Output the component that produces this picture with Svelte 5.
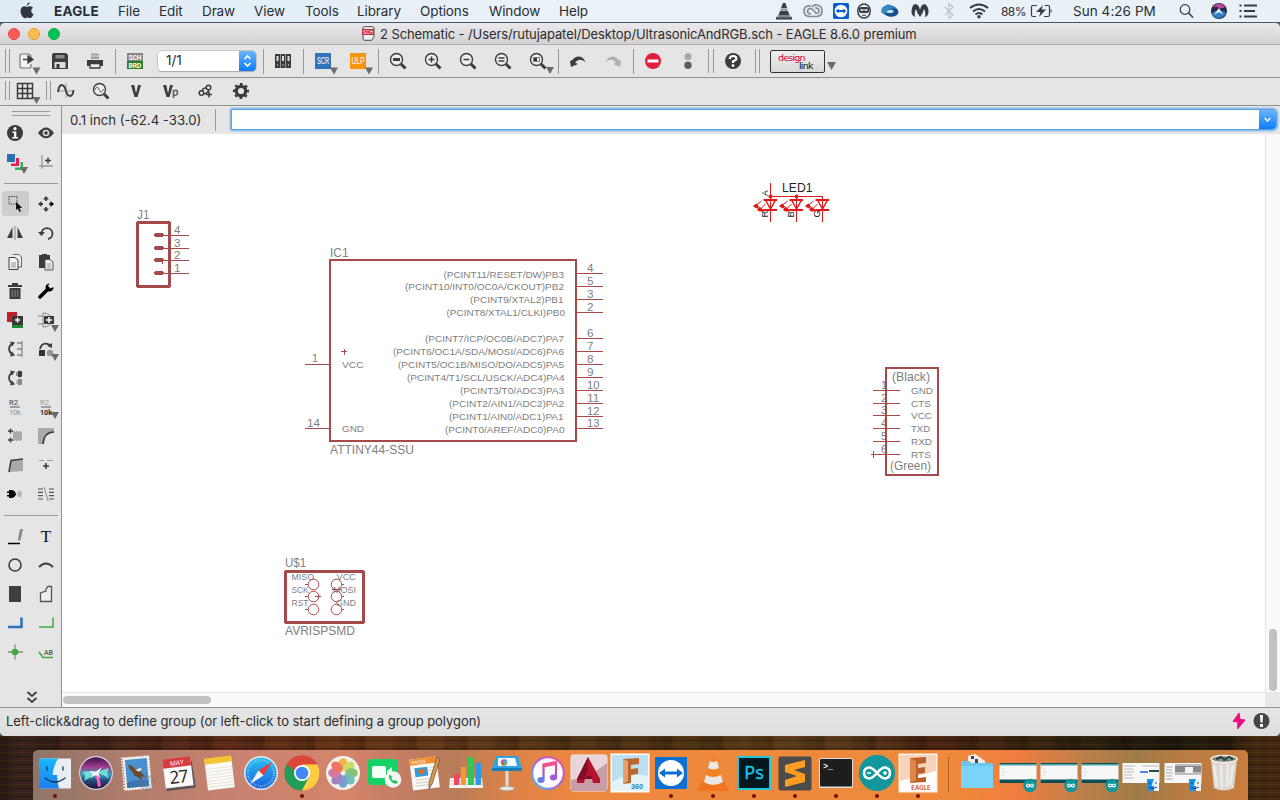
<script>
  const K = '#3c3c3c';
  const lens = (inner) =>
    `<circle cx="-1.500" cy="-1.500" r="6" fill="#eee" stroke="${K}" stroke-width="1.400"/>${inner}<path d="M3 3L7.500 7.500" stroke="${K}" stroke-width="3"/>`;

  const icons = {
    open: `<path d="M6-1V-5L4-7H-3Q-5-7-5-5V5Q-5 7-3 7H4Q6 7 6 5V3" fill="#f2f2f2" stroke="#777" stroke-width="1.200"/><path d="M-2-1.500h6M3-5l5 3.500L3 2z" fill="${K}" stroke="${K}" stroke-width="1.300"/><path d="M7.500 6.500h8l-4 7z" fill="#6b6b6b"/>`,
    save: `<path d="M-8-6Q-8-8-6-8H6L8-6V8H-8z" fill="${K}"/><path d="M-4.500-6H4.500V-2.500H-4.500z" fill="#8a8a8a"/><path d="M-5.500 1h11v6h-11z" fill="#dcdcdc"/><path d="M-3.500 3h3v4h-3z" fill="${K}"/>`,
    print: `<path d="M-4-7.500H4V-2H-4z" fill="#a3a3a3"/><path d="M-4-5H4" stroke="#ddd"/><path d="M-8-1H8V5H-8z" fill="${K}"/><path d="M-5 2.500H5V7H-5z" fill="#e8e8e8" stroke="${K}" stroke-width="1.300"/>`,
    sch: `<path d="M-8-8H8V0H-8z" fill="#858585"/><path d="M-8 0H8V8H-8z" fill="#23802a"/><g font-family="Roboto, sans-serif" font-weight="bold" font-size="8" fill="#fff" text-anchor="middle"><text x="0" y="-1.200" textLength="13" lengthAdjust="spacingAndGlyphs">SCH</text><text x="0" y="6.800" textLength="13" lengthAdjust="spacingAndGlyphs">BRD</text></g>`,
    bars: `<path d="M-8-7h5v14h-5zM-2.500-7h5v14h-5zM3-7h5v14h-5z" fill="${K}"/><path d="M-6.500-5h2v5h-2zM-1-5h2v5h-2zM4.500-5h2v5h-2z" fill="#ddd"/><path d="M-5.500 3v2M0 3v2M5.500 3v2" stroke="#aaa"/>`,
    scr: `<path d="M-8-8H8V8H-8z" fill="#2d74bb"/><text x="0" y="3" font-family="Roboto, sans-serif" font-size="8.500" fill="#fff" text-anchor="middle" textLength="12" lengthAdjust="spacingAndGlyphs">SCR</text><path d="M7 6.500h8l-4 7z" fill="#6b6b6b"/>`,
    ulp: `<path d="M-8-8H8V8H-8z" fill="#f6960f"/><text x="0" y="3" font-family="Roboto, sans-serif" font-size="8.500" fill="#fff" text-anchor="middle" textLength="13" lengthAdjust="spacingAndGlyphs">ULP</text><path d="M7 6.500h8l-4 7z" fill="#6b6b6b"/>`,
    zfit: lens(`<path d="M-5-3h7v3h-7z" fill="${K}"/>`),
    zin: lens(`<path d="M-4.500-1.500h6M-1.500-4.500v6" stroke="${K}" stroke-width="1.600"/>`),
    zout: lens(`<path d="M-4.500-1.500h6" stroke="${K}" stroke-width="1.600"/>`),
    zeq: lens(`<path d="M-4.500-3h6M-4.500 0h6" stroke="${K}" stroke-width="1.400"/>`),
    zsel: lens(`<path d="M-4.500-3.500H1.500V.500H-4.500z" fill="#eee" stroke="#777"/><path d="M-4-3h3v3h-3z" fill="#333"/>`) + '<path d="M8 6h8l-4 7z" fill="#6b6b6b"/>',
    undo: `<path d="M-8 0L-7 6L0 3L-3 1.500Q0-2 3-1Q6-1 7.500 2Q6-5 0-4.500Q-4-4-5.500-1z" fill="${K}"/>`,
    redo: `<path d="M8 0L7 6L0 3L3 1.500Q0-2-3-1Q-6-1-7.500 2Q-6-5 0-4.500Q4-4 5.500-1z" fill="#b0b0b0"/>`,
    stop: `<circle r="8" fill="#e01f3d"/><path d="M-5.500-1.500h11v3h-11z" fill="#fff"/>`,
    dots: `<circle cy="-4.500" r="3.500" fill="#a8a8a8"/><circle cy="4.300" r="3.700" fill="#5c5c5c"/>`,
    help: `<circle r="8" fill="${K}"/><path d="M-3.300-2Q-3-5 .2-5Q3.500-5 3.300-2Q3-.5 0 .3V2" fill="none" stroke="#fff" stroke-width="2.200"/><circle cx="0" cy="4.700" r="1.400" fill="#fff"/>`,
    grid: `<path d="M-7.500-7.500h15v15h-15zM-7.500-2.500h15M-7.500 2.500h15M-2.500-7.500v15M2.500-7.500v15" fill="none" stroke="${K}" stroke-width="1.500"/><path d="M7.500 6h8l-4 7z" fill="#6b6b6b"/>`,
    sine: `<path d="M-8 0h16M0-8v15" stroke="#999"/><path d="M-8 1Q-7-6-4.500-6Q-1.500-6 0 0Q1.500 5 4 5Q7 5 7.500-1" fill="none" stroke="${K}" stroke-width="1.900"/>`,
    probe: lens(`<path d="M-6-1Q-4-7-2-1.500Q0 4 2.500-2" fill="none" stroke="#666"/>`),
    v: `<path d="M-5-6h3.200L0 2.500L2-6H5L1.500 6h-3z" fill="${K}"/>`,
    vp: `<path d="M-8-6h3.200L-3 2.500L-1-6H2L-1.500 6h-3z" fill="${K}"/><path d="M2.500 7V-1M2.500 0Q6.500-2 6.500 1.500Q6.500 5 2.500 4" fill="none" stroke="#666" stroke-width="1.700"/>`,
    link: `<g fill="none" stroke="${K}" stroke-width="1.500"><circle cx="-4.500" cy="2" r="2.300"/><circle cx="2.500" cy="-3.500" r="2.300"/><path d="M-3.500 0Q-4-3 0-3M-2.500 3Q2 2.500 2.500-1M0 3.500h6M3 .5v6"/></g>`,
    gear: `<circle r="4.700" fill="none" stroke="${K}" stroke-width="3.200"/><circle r="7" fill="none" stroke="${K}" stroke-width="2.200" stroke-dasharray="2.750 2.750" stroke-dashoffset="1.370"/>`,

    info: `<circle r="8" fill="${K}"/><circle cy="-4.300" r="1.600" fill="#fff"/><path d="M-2.500-1.500H1.300V4H3V5.500H-2.800V4H-1V0H-2.500z" fill="#fff"/>`,
    eye: `<path d="M-8 0Q0-11 8 0Q0 10.500-8 0z" fill="${K}"/><circle r="3.300" fill="#ddd"/><circle r="1.800" fill="${K}"/>`,
    layers: `<path d="M-8-8H0V0H-8z" fill="#2a70b8"/><path d="M1-4H4V4H-4V1.500H1z" fill="#e21b55"/><path d="M5.500 0H8V8H0V5.500H5.500z" fill="#2db35e"/><path d="M5 5h8l-4 7z" fill="#6b6b6b"/>`,
    mark: `<path d="M-4-7V7M-7 4H7" stroke="#999" stroke-width="1.300"/><path d="M-1-1.500h6M2-4.500v6" stroke="${K}" stroke-width="1.500"/>`,
    select: `<path d="M-7-7.500H1V0H-7z" fill="none" stroke="${K}" stroke-dasharray="1.300 1"/><path d="M0-2V6l2-1.500 1.300 3.500 1.700-.7-1.500-3.300 2.800-.3z" fill="#111"/>`,
    move: `<path d="M0-8l3 3.500h-6zM0 8l3-3.500h-6zM-8 0l3.500-3v6z" fill="${K}"/><path d="M8 0l-3.500-3v6z" fill="#000"/><path d="M0-5v2M0 5v-2M-5 0h2M5 0h-2" stroke="${K}" stroke-width="1.800"/>`,
    mirror: `<path d="M-2.500-6V5H-8zM2.500-6V5H8z" fill="${K}"/><path d="M0-7V7" stroke="#999" stroke-width="1.200"/>`,
    rotate: `<path d="M-4.500 0A5.500 5.500 0 1 1 2 6" fill="none" stroke="${K}" stroke-width="1.800"/><path d="M-8-1H-1L-4.500 3z" fill="${K}"/>`,
    copy: `<path d="M-2-7.500H4L6.500-5V5H3" fill="#eee" stroke="#666"/><path d="M-6-4.500H0L3-2V7.500H-6z" fill="#f3f3f3" stroke="${K}"/><path d="M-4 1h5M-4 3h5M-4 5h5" stroke="#888" stroke-width=".9"/>`,
    paste: `<path d="M-7-7H-4V-8H1V-7H4V6H-7z" fill="${K}"/><path d="M-1-2.500H4L7 0V8H-1z" fill="#eee" stroke="#555"/><path d="M1 2h4M1 4h4M1 6h4" stroke="#888" stroke-width=".8"/>`,
    trash: `<path d="M-7-6H-3V-8H3V-6H7V-4H-7z" fill="${K}"/><path d="M-5.500-3H5.500V8H-5.500z" fill="${K}"/><path d="M-2.700-1v7M0-1v7M2.700-1v7" stroke="#888"/>`,
    wrench: `<path d="M-6 6L2-2" stroke="#000" stroke-width="3.500" stroke-linecap="round"/><path d="M7.500-4A4 4 0 1 1 3.500-7.500L2-5 4.500-2.500z" fill="#000"/>`,
    add: `<path d="M-8-8H2V2H-8z" fill="#c0202a"/><path d="M-3 3H8V8H-3z" fill="#1f8a30"/><path d="M-3-4H8V5H-3z" fill="#383838"/><path d="M0 0h5M2.500-2.500v5" stroke="#fff" stroke-width="1.500"/>`,
    addgate: `<path d="M-8-4h5M-8 4h5M-3-7V7M-3-7Q5-7 5 0Q5 7-3 7" fill="none" stroke="#888"/><path d="M-2-4H8V4H-2z" fill="${K}"/><path d="M0 0h6M3-3v6" stroke="#fff" stroke-width="1.500"/><path d="M5 5h8l-4 7z" fill="#6b6b6b"/>`,
    pinswap: `<path d="M-3-5.500Q-9 0-3 5.500" fill="none" stroke="${K}" stroke-width="1.800"/><path d="M-5-7.500l5 1-3 4zM-5 7.500l5-1-3-4z" fill="${K}"/><path d="M7-8V8" stroke="#aaa" stroke-width="2"/><path d="M2-6h5M2 0h5M2 6h5" stroke="#888" stroke-width="1.300"/>`,
    replace: `<path d="M-6 0Q-4-8 4-4" fill="none" stroke="${K}" stroke-width="1.800"/><path d="M1-3l5-3v5z" fill="${K}"/><path d="M-7 1H-1V7H-7z" fill="#333"/><circle cx="4" cy="4" r="3.300" fill="#999"/><path d="M5 5h8l-4 7z" fill="#6b6b6b"/>`,
    gateswap: `<path d="M-3-5.500Q-9 0-3 5.500" fill="none" stroke="${K}" stroke-width="1.800"/><path d="M-5-7.500l5 1-3 4zM-5 7.500l5-1-3-4z" fill="${K}"/><path d="M3-7Q8-8 7-4Q8 0 3-1zM1-5.500h2v1H1zM1-3.500h2v1H1z" fill="${K}"/><path d="M3 1Q8 0 7 4Q8 8 3 7zM1 2.500h2v1H1zM1 4.500h2v1H1z" fill="#888"/>`,
    name: `<g font-family="Roboto, sans-serif" font-size="8"><text x="-6" y="-2" fill="#444" textLength="9" lengthAdjust="spacingAndGlyphs">R2</text><text x="-6" y="8" fill="#999" textLength="12">10k</text></g><path d="M-5 0H5" stroke="#777" stroke-width="1.300"/>`,
    value: `<g font-family="Roboto, sans-serif" font-size="8"><text x="-6" y="-2" fill="#999" textLength="9" lengthAdjust="spacingAndGlyphs">R2</text><text x="-6" y="8" fill="#222" font-weight="bold" textLength="12" lengthAdjust="spacingAndGlyphs">10k</text></g><path d="M-5 0H5" stroke="#777" stroke-width="1.300"/><path d="M5 5h8l-4 7z" fill="#6b6b6b"/>`,
    smash: `<path d="M-7-5h5M-4.500-7.500v5M-7 4h5M-4.500 1.500v5" stroke="${K}" stroke-width="1.400"/><path d="M-2-4H7V4H-2z" fill="#aaa"/><path d="M-2-4.500H7M-2 4.500H7" stroke="#aaa" stroke-dasharray="2 1"/>`,
    miter: `<path d="M-8-8H8V-4Q-2-4-3 8H-8z" fill="#aaa"/><path d="M-3 8Q-2-4 8-4" fill="none" stroke="${K}" stroke-width="1.700"/>`,
    split: `<path d="M-5 7L-4-4L8-6V6Z" fill="#aaa"/><path d="M-6 7L-4-4.500L8-6" fill="none" stroke="${K}" stroke-width="1.600"/>`,
    optimize: `<path d="M-7-4.500h5M1-4.500h6" stroke="#999" stroke-width="1.200"/><path d="M-3 1h6M0-2v6" stroke="${K}" stroke-width="1.600"/>`,
    invoke: `<path d="M-8-2.500h2V-4h2q4 0 5 4q-1 4-5 4h-2V2.500h-2V1h2v-2h-2z" fill="#000"/><path d="M7 0L6-3Q2-4 2 0Q2 4 6 3z" fill="#b5b5b5"/>`,
    net: `<path d="M-8-5h5M-8-1.700h5M-8 1.700h5M-8 5h5M3-5h5M3-1.700h5M3 1.700h5M3 5h5" stroke="#555" stroke-width="1.200"/><path d="M-2-7L2 7" stroke="#888"/>`,
    wire: `<path d="M5-7H8L5.500 4L3 5L3.500 0z" fill="#8a8a8a"/><path d="M-7 7.500H5" stroke="#000" stroke-width="1.600"/>`,
    text: `<text x="0" y="5.500" text-anchor="middle" font-family="Liberation Serif, serif" font-size="17" fill="#111">T</text>`,
    circle: `<circle r="6" fill="none" stroke="${K}" stroke-width="1.600"/>`,
    arc: `<path d="M-7 2Q0-5 7 2" fill="none" stroke="${K}" stroke-width="2"/>`,
    rect: `<path d="M-6-8H6V8H-6z" fill="#3f3f3f"/>`,
    poly: `<path d="M-5.500 7.500V-1L0-3V-5L2-7.500H5.500V7.500z" fill="#eee" stroke="#555" stroke-width="1.300"/>`,
    bus: `<path d="M-7 4H6.500V-5.500" fill="none" stroke="#2d74bb" stroke-width="2.600"/>`,
    netline: `<path d="M-7 4H7V-5.500" fill="none" stroke="#3caa3c" stroke-width="1.500"/>`,
    junction: `<path d="M-7 0H8M0-7.500V7.500" stroke="#8a8a8a" stroke-width="1.300"/><circle r="3.300" fill="#3caa3c"/>`,
    label: `<path d="M-7 0L-3 5.500H7" fill="none" stroke="#3caa3c" stroke-width="1.600"/><text x="-2" y="3" font-family="Roboto, sans-serif" font-size="8" fill="#333" textLength="9" lengthAdjust="spacingAndGlyphs">AB</text>`,

    cone: `<path d="M-1-8h2.500L3-3H-3zM-4 0H4L5.500 4H-5.500zM-8 6H8V8.500H-8z" fill="#384049"/><path d="M-3-2.500h6l1 2H-4zM-6 4h12l1.500 2.500h-15z" fill="#83898e"/>`,
    cc: `<g fill="none" stroke="#858c93" stroke-width="1.700"><path d="M-2-5Q-9-6-9 0Q-9 5.500-3 5.500H3M-1-4Q1-6.500 4-6Q9-5.500 9 0Q9 5.500 3 5.500"/><path d="M-2 3Q-6 2.500-5.500-.5Q-4-3.500-1-2L3 2Q5.500 3 6 0Q5.500-3.500 2-3"/></g>`,
    tv: `<rect x="-8" y="-8" width="16" height="16" rx="1.500" fill="#0b5ed0"/><circle r="6.300" fill="#fff"/><path d="M-5.300 0l3-2.500V-1H2.300V-2.500l3 2.500-3 2.500V1H-2.300V2.500z" fill="#0b5ed0"/>`,
    robot: `<ellipse rx="6.300" ry="7" fill="none" stroke="#363d44" stroke-width="1.400"/><rect x="-5.500" y="-4" width="11" height="6" rx="3" fill="#363d44"/><path d="M-3.500-1h3M.5-1h3" stroke="#fff" stroke-width="1.300"/><path d="M-2 4.200h4" stroke="#363d44"/>`,
    swirl: `<ellipse rx="8.500" ry="5.500" cx="0" cy="0" fill="#194e8d" transform="rotate(12)"/><path d="M-8-2Q-2-11 6-2Q0-4-3 1Q-6 4-9 1z" fill="#3486c6"/><path d="M-4 1Q0-3 4 0Q2 4-4 1z" fill="#bde6f6"/>`,
    mb: `<path d="M-5-7Q-1-7 0-1Q1-7 5-7Q9-4 8.500 2Q8 5 5 6Q6 1 4-2Q3 2 0 6Q-3 2-4-2Q-6 1-5 6Q-9 4-8.500 0Q-8-6-5-7z" fill="#353c43"/>`,
    bt: `<path d="M-4-4L4 4L0 7.500V-7.500L4-4L-4 4" fill="none" stroke="#bac1c7" stroke-width="1.100"/>`,
    wifi: `<g fill="none" stroke="#343b42" stroke-width="2"><path d="M-9-3Q0-10 9-3M-6 .5Q0-4.500 6 .5M-3.500 3.500Q0 .5 3.500 3.500"/></g><circle cy="5.800" r="1.700" fill="#343b42"/>`,
    battery: `<path d="M-4-5.500H-8Q-9.500-5.500-9.500-4V4Q-9.500 5.500-8 5.500H-5M4-5.500H7Q8.500-5.500 8.500-4V4Q8.500 5.500 7 5.500H3" fill="none" stroke="#343b42" stroke-width="1.200"/><path d="M2-6L-5 1H-.5L-2 6L5-1.500H.5zM9.700-2Q12 0 9.700 2z" fill="#343b42"/>`,
    search: `<circle cx="-1" cy="-1.500" r="4.800" fill="none" stroke="#343b42" stroke-width="1.200"/><path d="M2.500 2L7 6.500" stroke="#343b42" stroke-width="1.600"/>`,
    siri: `<circle r="8" fill="#252b4c"/><path d="M-6.500-4Q0-11 6.500-4Q2-2 0-3Q-3-5-6.500-4" fill="#c0449a"/><path d="M-7 2Q-2-2 0 0Q5-1 7 2Q4 8-2 7Q-6 6-7 2z" fill="#2c7fc0"/><path d="M-5 4L0-3L4 4L0 1z" fill="#e8f6ff"/>`,
    list: `<path d="M-4-5.500H9M-4 0H7M-4 5.500H9" stroke="#343b42" stroke-width="1.900"/><path d="M-8.500-5.500h2M-8.500 0h2M-8.500 5.500h2" stroke="#343b42" stroke-width="1.900"/>`,
  };

  const menus = [
    ['File', 41], ['Edit', 43], ['Draw', 52], ['View', 51], ['Tools', 52],
    ['Library', 63], ['Options', 69], ['Window', 70], ['Help', 60],
  ];
  const tray = [
    ['cone', 28], ['cc', 30], ['tv', 26], ['robot', 20], ['swirl', 32],
    ['mb', 28], ['bt', 30], ['wifi', 30],
  ];

  const toolGroups = [
    ['open', 'save', 'print'], ['sch', 'combo'], ['bars'], ['scr', 'ulp'],
    ['zfit', 'zin', 'zout', 'zeq', 'zsel'], ['undo', 'redo'], ['stop', 'dots'],
  ];
  const analysis = ['sine', 'probe', 'v', 'vp', 'link', 'gear'];
  const palette = [
    ['info', 'eye', 'layers', 'mark'],
    ['select', 'move', 'mirror', 'rotate', 'copy', 'paste', 'trash', 'wrench', 'add', 'addgate',
      'pinswap', 'replace', 'gateswap', '', 'name', 'value', 'smash', 'miter', 'split', 'optimize', 'invoke', 'net'],
    ['wire', 'text', 'circle', 'arc', 'rect', 'poly', 'bus', 'netline', 'junction', 'label'],
  ];

  const icPins = [
    [273.5, '4', '(PCINT11/RESET/DW)PB3', 443.5, 564],
    [286.5, '5', '(PCINT10/INT0/OC0A/CKOUT)PB2', 405, 564],
    [299.5, '3', '(PCINT9/XTAL2)PB1', 470, 563.5],
    [312.5, '2', '(PCINT8/XTAL1/CLKI)PB0', 446.5, 565],
    [338.5, '6', '(PCINT7/ICP/OC0B/ADC7)PA7', 425, 564],
    [351.5, '7', '(PCINT6/OC1A/SDA/MOSI/ADC6)PA6', 393, 564],
    [364.5, '8', '(PCINT5/OC1B/MISO/DO/ADC5)PA5', 398, 564],
    [377.5, '9', '(PCINT4/T1/SCL/USCK/ADC4)PA4', 407, 564.5],
    [390.5, '10', '(PCINT3/T0/ADC3)PA3', 460, 564],
    [403.5, '11', '(PCINT2/AIN1/ADC2)PA2', 449, 564],
    [416.5, '12', '(PCINT1/AIN0/ADC1)PA1', 449, 563.5],
    [428.5, '13', '(PCINT0/AREF/ADC0)PA0', 445, 564.5],
  ];
  const header = [[235.5, '4'], [248.5, '3'], [260.5, '2'], [273.5, '1']];
  const ftdi = [
    [390.5, '1', 'GND', 22], [403.5, '2', 'CTS', 20], [415.5, '3', 'VCC', 21],
    [428.5, '4', 'TXD', 19], [441.5, '5', 'RXD', 21], [454.5, '6', 'RTS', 20],
  ];
  const leds = [[770.5, 'R'], [796.5, 'B'], [822.5, 'G']];
  const isp = [
    [584.5, 'MISO', 22.5, 'VCC', 19.5], [596.5, 'SCK', 17, 'MOSI', 23], [609.5, 'RST', 17, 'GND', 20],
  ];

  const minis = (body) => `<rect x="-18.500" y="-10" width="37" height="20" fill="#f7f7f7"/>${body}`;
  const badge = `<circle cx="12" cy="12.500" r="6.700" fill="#11959b"/><path d="M12 12.500Q9.500 9.500 8.500 12.500Q9.500 15.500 12 12.500Q14.500 9.500 15.500 12.500Q14.500 15.500 12 12.500" fill="none" stroke="#fff" stroke-width="1.200"/>`;
  const finderBadge = `<path d="M6 6H18V18H6z" fill="#eaf3fa"/><path d="M6 6H13Q11 10 11 13H13V18H6z" fill="#1795f2"/><path d="M8 14Q12 17 16 14M9 9v2M15 9v2" stroke="#124" fill="none" stroke-width=".8"/>`;
  const sketch = minis(`<path d="M-18.500-10h37v1.500h-37zM-18.500 6.500h37v3.500h-37z" fill="#0a4f55"/><path d="M-18.500-8.500h37v1h-37z" fill="#36a9ab"/><path d="M-16-4h3M-16-1h4M-16 2h2" stroke="#ccc" stroke-width=".7"/>${badge}`);

  const dock = [
    [`<rect x="-16" y="-14.500" width="32" height="30" rx="1" fill="#e9eef5"/><path d="M-16-14.500H3Q-2-6-2.500 2H2Q2 9 4 15.500H-16z" fill="url(#gFinder)"/><path d="M-10 5Q0 13 10 5M-8-6v3M8-6v3" fill="none" stroke="#16314d" stroke-width="1.300" stroke-linecap="round"/>`, true],
    [`<circle r="17" fill="#d8d0d8"/><circle r="15.500" fill="#1d1838"/><circle r="15.500" fill="url(#gSiri)"/><path d="M-14-1Q-6-3 0 0Q-6 5-12 8Q-9 2-14-1zM13-5Q5-3 0 0Q8 1 13 6Q10 0 13-5z" fill="#7af0e6" opacity=".8"/><path d="M-2 0Q1 6 2 14L5 13Q4 6 2 0z" fill="#ff5fb5"/><path d="M-7-2L0-1.500L6-6L2.500 0L4 5L0 2L-6 5L-3 1z" fill="#fff" opacity=".9"/>`],
    [`<g transform="rotate(-5)"><rect x="-13" y="-16" width="26" height="32" fill="#f4f2ec"/><rect x="-11" y="-14" width="22" height="28" fill="#4a90cf"/><path d="M-14-16H13V16H-14z" fill="none" stroke="#f4f2ec" stroke-width="1.600" stroke-dasharray="1.600 1.200"/><path d="M-8-9Q-3-8-1-3L4-1L9 6L4 3L5 8L0 4Q-4 3-4-1Q-8-4-8-9z" fill="#6b4a2e"/><path d="M-1-3L4-5L5-3L2-1z" fill="#f0e6d4"/><path d="M-11 9Q0 5 11 9V14H-11z" fill="#3a75ae"/></g><circle cx="10" cy="10" r="7" fill="none" stroke="#65738a" opacity=".6"/><circle cx="10" cy="10" r="4.500" fill="none" stroke="#65738a" opacity=".5"/>`],
    [`<g transform="rotate(-7)"><path d="M-14 13L-13 16.500H16L15-11z" fill="#555"/><rect x="-14" y="-14" width="28" height="28" fill="#fafafa"/><path d="M-14-15H14V-6H-14z" fill="#d83b3e"/><text y="-8" font-size="6.500" fill="#fff" text-anchor="middle" font-family="Open Sans, sans-serif">MAY</text><text y="10" font-size="17.500" fill="#222" text-anchor="middle" font-family="Open Sans, sans-serif" letter-spacing="-1">27</text></g>`],
    [`<g transform="rotate(-7)"><rect x="-13" y="-15" width="27" height="31" fill="#fbfaf4"/><path d="M-13-16H14V-10H-13z" fill="#f5c431"/><path d="M-13-5H14M-13-2H14M-13 1H14M-13 4H14M-13 7H14M-13 10H14M-13 13H14" stroke="#e0e0da" stroke-width=".8"/></g>`],
    [`<circle r="17" fill="#e6ebef"/><circle r="15.500" fill="url(#gSafari)"/><circle r="13" fill="none" stroke="#b9e3fa" stroke-width="2" stroke-dasharray=".6 1.700"/><path d="M11-11L2.500 2.500L-2.500-2.500z" fill="#ef3b3c"/><path d="M-11 11L-2.500-2.500L2.500 2.500z" fill="#f3f3f3"/>`],
    [`<circle r="17.500" fill="#db4437"/><path d="M0 0L-15.200-8.700A17.500 17.500 0 0 0 0 17.500L8 4z" fill="#1f9d59"/><path d="M0 17.500A17.500 17.500 0 0 0 15.200-8.700H0L7 4z" fill="#ffcd43"/><path d="M-15.200-8.700A17.500 17.500 0 0 1 15.200-8.700H0L-7-2z" fill="#dc473b"/><circle r="8" fill="#fff"/><circle r="6.300" fill="#4486f4"/>`, true],
    [`<circle r="17" fill="#f4f2ee"/><g opacity=".82">${['#f6a623', '#c8d64a', '#72b957', '#56b6a4', '#5a8fd0', '#8c6bb5', '#cf5f9a', '#ec5b45'].map((c, i) => `<ellipse cx="0" cy="-8.500" rx="4.800" ry="6.300" fill="${c}" transform="rotate(${i * 45})"/>`).join('')}</g>`],
    [`<rect x="-16" y="-14" width="30" height="26" rx="4" fill="#13d367"/><rect x="-12" y="-7" width="14" height="12" rx="2" fill="#f4fff8"/><path d="M3-2L8-6V4L3 1z" fill="#e6f8ed"/><circle cx="9" cy="6.500" r="8.300" fill="#f5f5f5"/><path d="M5 2Q4 6 9 10Q13 12 14 9L11 7L9.500 8Q7 6 7.500 4L8 3z" fill="#21c55b"/>`],
    [`<g transform="rotate(-7)"><rect x="-14" y="-15" width="27" height="31" fill="#faf9f6"/><path d="M-14-15H13V-9H-14z" fill="#f08c2a"/><text x="-12" y="-10" font-size="4.500" fill="#fff" font-family="Inter, sans-serif">PAGES</text><path d="M-10-6H3V3H-10z" fill="#2c9de0"/><path d="M-8-4H1L-3 2z" fill="#e76b24"/><path d="M5-5H10M5-2H10M5 1H10M-10 6H8M-10 9H8M-10 12H4" stroke="#ccc"/></g><path d="M12-16L15-14L7 11L4 16L4 10z" fill="#e8973b" stroke="#555" stroke-width=".8"/>`],
    [`<path d="M-16 5H16L17 15H-17z" fill="#f4f4f4"/><path d="M-15 8H16M-16 11H16" stroke="#ccc" stroke-width=".8"/><path d="M-12 1h5.500v11H-12z" fill="#ee4763"/><path d="M-5-6H0V12H-5z" fill="#f79830"/><path d="M2-16H8V12H2z" fill="#31c656"/><path d="M9.500-10H15V12H9.500z" fill="#2c98e7"/>`],
    [`<path d="M-11-17H11L15-5H-15z" fill="#2fa6e4"/><path d="M-15-5H15V-2H-15z" fill="#187eb8"/><path d="M-9-15H8L10-7H-9z" fill="#f4f8fb"/><circle cx="-3" cy="-10.500" r="3.200" fill="#ea4b83"/><path d="M-3-10.500V-13.700A3.200 3.200 0 0 1 .2-10.500z" fill="#3da9e8"/><path d="M-3-10.500H.2A3.200 3.200 0 0 1-3-7.300z" fill="#4fc46a"/><path d="M-1.500-2H1.500V15H-1.500z" fill="#ddd"/><ellipse cy="15.500" rx="7.500" ry="2.200" fill="#e6e6e6" stroke="#999" stroke-width=".6"/>`],
    [`<circle r="17" fill="url(#gMusicRing)"/><circle r="14.800" fill="#fbfafd"/><path d="M-4.500 6V-8L8-10.500V4" fill="none" stroke="url(#gMusic)" stroke-width="2.200"/><path d="M-5-7.500L8-10" stroke="#f0508c" stroke-width="4"/><ellipse cx="-7" cy="7" rx="3.600" ry="2.900" fill="#657be5"/><ellipse cx="5.500" cy="4.500" rx="3.600" ry="2.900" fill="#a85ad0"/>`],
    [`<rect x="-18" y="-18" width="36" height="36" rx="2" fill="#e7d5da" stroke="#f6e8ea"/><path d="M-18 7Q0 5 18-10V18H-18z" fill="#c79da8"/><path d="M-1-16L11 6V10H4L3 6H-4L-5 10H-12V6z" fill="#b5122d"/><path d="M-1-16V-4L-5 6L-12 7V6z" fill="#820d24"/><path d="M-4 6H3L2 3H-3z" fill="#7c0c20"/>`],
    [`<path d="M-19.500-19.500H19.500V19.500H-19.500z" fill="#fff"/><path d="M-18-18H18V18H-18z" fill="#bce0ef"/><path d="M-18 9Q0-2 18 3V18H-18z" fill="#e3f3f8"/><path d="M-7-14L9-15V-9L1-8V-4L8-5V1L1 2V10L-7 11z" fill="#bb672f"/><path d="M-7-14L-2-12V8L-7 11z" fill="#e6a06b"/><text x="7" y="16" text-anchor="middle" font-size="7.200" font-weight="bold" font-family="Liberation Sans, sans-serif" fill="#267fb5">360</text>`],
    [`<rect x="-16" y="-16" width="32" height="32" rx="1" fill="#0a70d2"/><circle r="13" fill="#fff"/><path d="M-12 0L-6-4.500V-1.500H6V-4.500L12 0L6 4.500V1.500H-6V4.500z" fill="#0a70d2"/>`, true],
    [`<path d="M-11 8H11L16 18H-16z" fill="#ef761d"/><path d="M-2-15Q0-17 3-15L10 9Q0 15-9 9z" fill="#f58220"/><path d="M-3-12Q0-10 4-12L6-5Q0-2-5-5zM-7 2Q0 6 8 2L10 9Q0 15-9 9z" fill="#e9e8e5"/>`, true],
    [`<path d="M-17-17H17V17H-17z" fill="#20c7de"/><path d="M-15-15H15V15H-15z" fill="#02181e"/><text y="6" text-anchor="middle" font-size="18" font-family="Open Sans, sans-serif" fill="#1fc8e8" stroke="#1fc8e8" stroke-width=".4">Ps</text>`, true],
    [`<rect x="-16.500" y="-16.500" width="33" height="34" rx="2" fill="#4b4b4a"/><path d="M10-13V-6L-1-3L10 1V9L-10 14V7L2 3L-10-1V-8z" fill="#ff9c22"/>`, true],
    [`<rect x="-17" y="-15" width="34" height="30" rx="2" fill="#ddd"/><rect x="-16" y="-14" width="32" height="27.500" rx="1" fill="#1d1d1d"/><text x="-13" y="-4" font-size="8.500" font-weight="bold" font-family="Liberation Mono, monospace" fill="#eee">&gt;_</text>`, true],
    [`<circle r="18" fill="#11979c"/><path d="M0 0Q-5-6-8.500-5.500Q-13-4.500-13 0Q-13 4.500-8.500 5.500Q-5 6 0 0Q5-6 8.500-5.500Q13-4.500 13 0Q13 4.500 8.500 5.500Q5 6 0 0" fill="none" stroke="#fff" stroke-width="2.500"/><path d="M-10 0h4M6 0h4M8-2v4" stroke="#fff" stroke-width="1.400"/>`, true],
    [`<path d="M-19.500-19.500H19.500V19.500H-19.500z" fill="#fff2e8"/><path d="M-18-18H18V18H-18z" fill="#f8d2bb"/><path d="M-18 8L18-2V18H-18z" fill="#fff"/><path d="M-8-15L8-16V-10L0-9V-5L7-6V0L0 1V5L8 4V9L-8 10z" fill="#bc602b"/><path d="M-8-15L-2-12V7L-8 10z" fill="#df844b"/><text x="3" y="16.500" text-anchor="middle" font-size="6" font-weight="bold" font-family="Inter, sans-serif" fill="#dd652a">EAGLE</text>`, true],
  ];
  const stack = [
    `<path d="M-9-17L-2-19L8-12V-4H-9z" fill="#ececec"/><path d="M-6-17h3v3h-3zM-2-14h3v4h-3z" fill="#444"/><path d="M-16-12H-8L-6-10H16V15H-16z" fill="#6ac5ef"/><path d="M-16-7H16V15H-16z" fill="#79d4f7"/>`,
    sketch, sketch, sketch,
    minis(`<path d="M-17-7h11M-17-4h9M-17-1h10M-17 2h8M-17 5h10M1-7h16" stroke="#bbb"/><path d="M-1-2h8v2h-8z" fill="#4c89dc"/><path d="M8-3h10v2H8z" fill="#245053"/>${finderBadge}`),
    minis(`<path d="M-8-9H18V2H-8z" fill="#bdbdbd"/><path d="M-8-7H18V-1H-8z" fill="#888"/><path d="M2-6h8v6h-8z" fill="#f4f4f4"/><path d="M-17-6h7M-17-3h6M-17 0h7M-17 3h6M-17 6h7" stroke="#aaa"/>${finderBadge}`),
    `<path d="M-13-14L-10 15Q0 20 10 15L13-14z" fill="#dcd8d1"/><path d="M-10-8L-7 14M-3-8L-2 15M4-9L3 14M9-8L6 12" stroke="#ecebe7" stroke-width="2.500"/><ellipse cy="-14" rx="13" ry="3.500" fill="#807d78" stroke="#f2f0ea" stroke-width="1.500"/><path d="M-8-14L-3-16L0-13L5-16L9-14" stroke="#313b39" fill="none" stroke-width="2"/><path d="M-4-13h3M4-14h2" stroke="#51c3a6" stroke-width="1.500"/>`,
  ];
</script>

{#snippet ico(name)}
  <svg class="ico" width="24" height="24" viewBox="-12 -12 24 24">{@html icons[name] ?? ''}</svg>
{/snippet}

{#snippet label(x, y, w, str, size = 9.7)}
  <text {x} {y} font-size={size} textLength={w} lengthAdjust="spacingAndGlyphs">{str}</text>
{/snippet}

<div class="screen">
  <header class="menubar">
    <svg class="apple" width="14" height="17" viewBox="0 0 14 17">
      <path d="M9.700 0Q9.800 2.800 7 4Q6.700 1.500 9.700 0zM7 5Q8.500 4 10.300 4.200Q12.200 4.500 13 5.800Q11 7 11.200 9.200Q11.400 11.300 13.500 12.200Q12 16 10.200 16.200Q8.500 15.500 7.200 15.600Q5.500 16.200 4.500 16.200Q2.500 15.700 1 12Q-.3 7.500 2 5.300Q4 3.500 7 5z" fill="#30373e" />
    </svg>
    <b class="app">EAGLE</b>
    {#each menus as [name, w]}
      <span class="menu" style:width="{w}px">{name}</span>
    {/each}
    <div class="tray">
      {#each tray as [name, w]}
        <span class="slot" style:width="{w}px">{@render ico(name)}</span>
      {/each}
      <span class="pct">88%</span>
      {@render ico('battery')}
      <span class="clock">Sun 4:26 PM</span>
      {@render ico('search')}
      <span class="siri">{@render ico('siri')}</span>
      <span class="notif">{@render ico('list')}</span>
    </div>
  </header>

  <main class="window">
    <div class="titlebar">
      <div class="lights"><i class="red"></i><i class="amber"></i><i class="green"></i></div>
      <div class="title">
        <svg width="13" height="15" viewBox="0 0 13 15">
          <path d="M1 2Q1 .7 2.500.7H10.500Q12 .7 12 2V11L9.500 14.300H2.500Q1 14 1 13z" fill="#eee" stroke="#4d4d4d" />
          <path d="M0 3H12V9H0z" fill="#c5283a" />
          <text x="1" y="8" font-size="5" fill="#fff" font-family="Roboto, sans-serif" textLength="10">SCH</text>
        </svg>
        <span>2 Schematic - /Users/rutujapatel/Desktop/UltrasonicAndRGB.sch - EAGLE 8.6.0 premium</span>
      </div>
    </div>

    <div class="toolbar main-tools">
      <div class="handle"></div>
      {#each toolGroups as group, i}
        {#if i}<div class="sep"></div>{/if}
        <div class="group">
          {#each group as name}
            {#if name === 'combo'}
              <div class="combo">
                <span>1/1</span>
                <svg width="17" height="20" viewBox="0 0 17 20"><path d="M5.500 8l3-3 3 3M5.500 12l3 3 3-3" fill="none" stroke="#fff" stroke-width="1.600" /></svg>
              </div>
            {:else}{@render ico(name)}{/if}
          {/each}
        </div>
      {/each}
      <div class="handle gap-a"></div>
      {@render ico('help')}
      <div class="handle gap-b"></div>
      <div class="designlink"><span>design</span><em>link</em></div>
      <svg class="more" width="9" height="8"><path d="M0 0h9L4.500 8z" fill="#6b6b6b" /></svg>
    </div>

    <div class="toolbar analysis">
      <div class="handle"></div>
      {@render ico('grid')}
      <div class="handle gap-c"></div>
      <div class="group">
        {#each analysis as name}{@render ico(name)}{/each}
      </div>
    </div>

    <div class="work">
      <aside>
        <div class="grip"></div>
        {#each palette as section, i}
          {#if i}<hr />{/if}
          <div class="cells">
            {#each section as name}
              <div class="cell" class:active={name === 'select'}>{@render ico(name)}</div>
            {/each}
          </div>
        {/each}
        <svg class="expand" width="12" height="14" viewBox="0 0 12 14"><path d="M1.500 1L6 5l4.500-4M1.500 7L6 11l4.500-4" fill="none" stroke="#444" stroke-width="2" /></svg>
      </aside>

      <section class="editor">
        <div class="command">
          <span class="coords">0.1 inch (-62.4 -33.0)</span>
          <div class="vline"></div>
          <div class="input">
            <svg width="17" height="20" viewBox="0 0 17 20"><path d="M5.500 8.500l3 3 3-3" fill="none" stroke="#fff" stroke-width="1.500" /></svg>
          </div>
        </div>

        <div class="sheet">
          <svg class="schematic" width="1203" height="558" viewBox="62 134 1203 558">
            <!-- J1 -->
            <g class="part">
              <rect x="137.500" y="222.500" width="32" height="64" rx="1" stroke-width="3" />
              {#each header as [y, n]}
                <path d="M160 {y}H189" stroke-width="1" />
                <path d="M154 {y - 0.5}l1.500-2h7l2 2-2 2h-7z" fill="#a5494b" stroke="none" />
                {@render label(174, y - 2, 6.5, n, 10)}
              {/each}
              <path d="M162.500 260V264" />
              {@render label(137, 219, 12.5, 'J1', 12.5)}
            </g>
            <!-- IC1 -->
            <g class="part">
              <rect x="330" y="260" width="246" height="181" stroke-width="2" />
              {#each icPins as [y, n, name, x1, x2], i}
                <path d="M577 {y}H603" />
                {@render label(587, y - 1.5, n.length > 1 ? 12.5 : 6.5, n, 10)}
                {@render label(x1, i === 0 || i === 11 ? y + 4.5 : y + 3.5, x2 - x1, name)}
              {/each}
              <path d="M305 364.500H329M305 428.500H329M341 351.500h6M344 348.500v6" />
              {@render label(312, 362, 6, '1', 10)}
              {@render label(307, 427, 13, '14', 10)}
              {@render label(342, 368, 21.5, 'VCC')}
              {@render label(342, 432, 22, 'GND')}
              {@render label(330, 257, 18.5, 'IC1', 12.5)}
              {@render label(330, 454, 84, 'ATTINY44-SSU', 12.5)}
            </g>
            <!-- LED1 -->
            <g class="led">
              <path d="M770.500 183V222M796.500 196V222M822.500 196V222M770 196.500H823" />
              {#each leds as [x, c], i}
                <path d="M{x - 7} 200H{x + 6.5}M{x - 7} 210H{x + 6.5}" stroke-width="2" />
                <path d="M{x - 5} 200L{x} 209L{x + 5} 200" stroke-width="1.500" />
                <path d="M{x - 15} 206L{x - 9} 201M{x - 11} 210L{x - 5} 204" />
                <path d="M{x - 17} 206l3-2 2 3-2 1zM{x - 13} 210l2-3 2 2 2 1v1h-4z" fill="#e31919" />
                {#if i < 2}<circle cx={x} cy="196.500" r="2" fill="#e31919" stroke="none" />{/if}
                <text transform="translate({x - 2.5} 217.500) rotate(-90)" font-size="9.500">{c}</text>
              {/each}
              <text transform="translate(767.500 196) rotate(-90)" font-size="8.500">A</text>
              {@render label(782, 192, 30.5, 'LED1', 12.5)}
            </g>
            <!-- serial header -->
            <g class="part">
              {#each ftdi as [y, n, name, w]}
                <path d="M873 {y}H900" />
                {@render label(881, y - 2, 6, n, 10)}
                {@render label(911, y + 3.5, w, name)}
              {/each}
              <path d="M871 454.500h3M873.500 451v7" />
              <rect x="886" y="368" width="52" height="107" stroke-width="2" />
              {@render label(892, 381, 38, '(Black)', 12.5)}
              {@render label(890, 470, 41, '(Green)', 12.5)}
            </g>
            <!-- ISP header -->
            <g class="part">
              <rect x="285.500" y="571.500" width="78" height="51" rx="1" stroke-width="3" />
              {#each isp as [y, l, lw, r, rw], i}
                {@render label(291.5, 580 + i * 13, lw, l)}
                {@render label(356 - rw, 580 + i * 13, rw, r)}
                <circle cx="313.500" cy={y} r="5.300" />
                <circle cx="336.500" cy={y} r="5.300" />
                <path d="M305 {y}h3M342 {y}h2" />
              {/each}
              <path d="M315 596.500h6M318.500 594v5M332 589.500h9" />
              {@render label(285, 567, 21, 'U$1', 12.5)}
              {@render label(285, 635, 70, 'AVRISPSMD', 12.5)}
            </g>
          </svg>
          <div class="vscroll"><i></i></div>
          <div class="hscroll"><i></i></div>
          <div class="corner"></div>
        </div>
      </section>
    </div>

    <footer>
      <span>Left-click&amp;drag to define group (or left-click to start defining a group polygon)</span>
      <svg width="38" height="18" viewBox="0 0 38 18">
        <path d="M7 1L1 9.500L6 10L5.500 17L13 8L8 7.500z" fill="#ed0c80" stroke="#ed0c80" />
        <circle cx="29.500" cy="9" r="8" fill="#454545" />
        <path d="M28 3h3l-.5 7.500h-2zM28 12h3v3h-3z" fill="#fff" />
      </svg>
    </footer>
  </main>

  <div class="desktop">
    <nav class="dock">
      <svg width="0" height="0" class="defs">
        <defs>
          <linearGradient id="gFinder" x2="0" y2="1"><stop stop-color="#19b9fb" /><stop offset="1" stop-color="#1a7ff0" /></linearGradient>
          <linearGradient id="gSafari" x2="0" y2="1"><stop stop-color="#27c0f5" /><stop offset="1" stop-color="#1b62dc" /></linearGradient>
          <linearGradient id="gSiri" x2="0" y2="1"><stop stop-color="#3a1550" /><stop offset=".3" stop-color="#a03a8c" /><stop offset=".55" stop-color="#3aa0b8" /><stop offset=".75" stop-color="#24487c" /><stop offset="1" stop-color="#1a1638" /></linearGradient>
          <linearGradient id="gMusic" x2="0" y2="1"><stop stop-color="#f34a74" /><stop offset="1" stop-color="#666de5" /></linearGradient>
          <linearGradient id="gMusicRing" x1="1" x2="0" y2="1"><stop stop-color="#f8548c" /><stop offset=".5" stop-color="#aa63df" /><stop offset="1" stop-color="#3ccaf0" /></linearGradient>
        </defs>
      </svg>
      {#each dock as [art, running]}
        <div class="tile" class:running>
          <svg width="40" height="40" viewBox="-20 -20 40 40">{@html art}</svg>
        </div>
      {/each}
      <div class="divider"></div>
      {#each stack as art}
        <div class="tile"><svg width="40" height="40" viewBox="-20 -20 40 40">{@html art}</svg></div>
      {/each}
    </nav>
  </div>
</div>

<style>
  :global(body) { overflow: hidden; }
  .screen {
    width: 1280px; height: 800px; display: flex; flex-direction: column;
    font: 13px Inter, sans-serif; color: #2c2c2c; background: #4d5c67;
    cursor: default; overflow: hidden;
  }
  svg { display: block; overflow: visible; flex: none; }

  .menubar {
    height: 22px; flex: none; display: flex; align-items: center; padding-left: 20px;
    background: linear-gradient(90deg, #deebf4, #eaf1f7 40%, #e9f0f6); white-space: nowrap;
    border-bottom: 1px solid #475764; font-size: 13.5px; color: #272e35;
  }
  .apple { margin-right: 20px; margin-top: -1px; }
  .app { width: 64px; font-weight: 700; letter-spacing: .25px; }
  .menu { flex: none; letter-spacing: -.1px; }
  .tray { margin-left: auto; display: flex; align-items: center; padding-right: 20px; }
  .slot { display: flex; justify-content: center; }
  .pct { font-size: 12px; margin-left: 7px; width: 28px; letter-spacing: -.6px; }
  .clock { margin-left: 20px; width: 101px; letter-spacing: .05px; }
  .siri { margin-left: 9px; }
  .notif { margin-left: 5px; }

  .window {
    height: 713px; flex: none; display: flex; flex-direction: column;
    background: #e5e5e5; border-radius: 5px; overflow: hidden;
  }
  .titlebar {
    height: 21px; flex: none; display: flex; align-items: center;
    background: linear-gradient(#ebe9eb, #d3d1d3); border-bottom: 1px solid #b1afb1;
  }
  .lights { display: flex; gap: 8px; padding-left: 8px; }
  .lights i { width: 12px; height: 12px; border-radius: 50%; box-sizing: border-box; border: 1px solid #e2453f; background: #fc5b57; }
  .lights .amber { background: #fdbc4e; border-color: #e0a03a; }
  .lights .green { background: #06c453; border-color: #09ab45; }
  .title { display: flex; gap: 5px; align-items: center; margin-left: 302px; letter-spacing: -.1px; white-space: nowrap; }

  .toolbar { display: flex; align-items: center; flex: none; border-bottom: 1px solid #919191; padding-left: 5px; }
  .main-tools { height: 32px; }
  .analysis { height: 25px; padding-bottom: 2px; }
  .group { display: flex; gap: 11px; align-items: center; }
  .handle { width: 3px; height: 24px; border: solid #999; border-width: 0 1px; margin-right: 3px; flex: none; }
  .analysis .handle { height: 19px; }
  .sep { width: 1px; height: 25px; background: #999; margin: 0 7px 0 8px; flex: none; }
  .gap-a { margin-left: 8px; width: 4px; margin-right: 7px; }
  .gap-b { margin-left: 10px; margin-right: 10px; }
  .gap-c { margin-left: 9px; }
  .combo {
    width: 98px; height: 20px; margin: 0 -1px 1px 0; display: flex; justify-content: space-between; align-items: center;
    background: #fff; border-radius: 4px; box-shadow: 0 0 0 .5px #a9a9a9, 0 1px 1px #aaa; font-size: 13.5px;
  }
  .combo span { padding-left: 8px; margin-top: -1px; }
  .combo svg { background: linear-gradient(#69b4fa, #0c7efc); border-radius: 0 4px 4px 0; }
  .designlink {
    width: 53px; height: 21px; border: 1px solid #333; border-radius: 2px; flex: none;
    background: linear-gradient(#eee, #d9d9d9); font: 9.5px/8px "DejaVu Sans", sans-serif; letter-spacing: -.8px;
    display: flex; flex-direction: column; justify-content: flex-end;
  }
  .designlink span, .designlink em { height: 8px; }
  .designlink span { color: #d2003c; padding-left: 7px; }
  .designlink em { font-style: normal; color: #111; padding: 0 0 2px 28px; }
  .more { margin: 9px 0 0 1.5px; }

  .work { flex: 1; display: flex; min-height: 0; }
  aside { width: 61px; border-right: 1px solid #919191; flex: none; display: flex; flex-direction: column; align-items: center; }
  .grip { width: 38px; height: 3px; border: solid #999; border-width: 1px 0; margin: 5px 0 2px; flex: none; }
  .cells { display: grid; grid-template-columns: 30px 32px; grid-auto-rows: 29px; width: 61px; }
  .cell { display: flex; align-items: center; justify-content: center; }
  .active { background: #cdcdcd; border-radius: 4px; margin: 2px 1px 2px 2px; }
  hr { width: 54px; height: 1px; border: 0; background: #999; margin: 7px 0 5px; flex: none; }
  .expand { margin-top: 25px; margin-left: 2px; }

  .editor { flex: 1; display: flex; flex-direction: column; min-width: 0; }
  .command { height: 27px; flex: none; display: flex; align-items: center; padding: 0 4px 1px 8px; }
  .coords { width: 145px; flex: none; font-size: 13.2px; white-space: nowrap; }
  .vline { width: 1px; height: 22px; background: #999; margin-right: 16px; }
  .input {
    flex: 1; height: 19px; background: #fff; display: flex; justify-content: flex-end;
    box-shadow: 0 0 0 1px #5f9fd8, 0 0 0 2.500px #8ec3ef; border-radius: 1px 4px 4px 1px;
  }
  .input svg { height: 19px; background: linear-gradient(#69b4fa, #0c7efc); border-radius: 0 4px 4px 0; }

  .sheet { flex: 1; display: grid; grid-template: 558px 15px / 1203px 15px; background: #fff; }
  .vscroll, .hscroll { background: #fafafa; display: flex; }
  .vscroll { border-left: 1px solid #e4e4e4; align-items: flex-end; justify-content: center; }
  .vscroll i { width: 8px; height: 62px; border-radius: 4px; background: #c1c1c1; margin-bottom: 1px; }
  .hscroll { border-top: 1px solid #e4e4e4; align-items: center; }
  .hscroll i { width: 148px; height: 8px; border-radius: 4px; background: #c1c1c1; margin-left: 1px; }
  .corner { background: #e8e8e8; }

  .schematic { overflow: hidden; font-family: "Liberation Sans", sans-serif; }
  .part { fill: none; stroke: #a5494b; stroke-width: 1; shape-rendering: crispEdges; }
  .part circle { shape-rendering: auto; }
  .part text { fill: #808080; stroke: none; }
  .led { fill: none; stroke: #e31919; }
  .led text { fill: #222; stroke: none; }

  footer {
    height: 29px; flex: none; border-top: 1px solid #929292; padding: 0 10px 2px 6px; box-sizing: border-box;
    display: flex; align-items: center; justify-content: space-between; background: linear-gradient(#e5e5e5, #dedede);
  }
  footer span { letter-spacing: -.05px; }

  .desktop {
    flex: 1; padding: 14px 32px 0 33px;
    background:
      repeating-linear-gradient(0deg, #0000 0 3px, #0004 3px 4px, #0000 4px 7px, #ffa04010 7px 8px),
      repeating-linear-gradient(90deg, #0003 0 7px, #0000 11px 33px, #0002 39px 51px),
      linear-gradient(90deg, #332019, #43251b 8%, #5a2a18 17%, #653317 26%, #62391a 35%, #533516 44%, #4b3213 54%, #5b3c18 60%, #54371a 67%, #4c2413 72%, #3b2710 80%, #201a0e 90%, #2a1d0c 96%, #583414);
  }
  .dock {
    height: 50px; display: flex; padding: 0 3px 0 1.5px; box-sizing: border-box; border-radius: 5px 5px 0 0;
    background: linear-gradient(90deg, #8e7568, #b07c6c 8%, #c98370 17%, #d4846b 26%, #c17c62 31%, #b87d58 35%, #db8249 39%, #ed873e 45%, #ee8a3b 70%, #ef883b 76%, #f07d40 81%, #b77f4a 87%, #9f7b49 91%, #ba7c42 95%, #c97c3e);
  }
  .defs { position: absolute; }
  .tile { width: 41.1px; flex: none; display: flex; flex-direction: column; align-items: center; padding-top: 3px; box-sizing: border-box; }
  .tile.running::after { content: ''; width: 4px; height: 4px; border-radius: 50%; background: #6a1408; margin-top: 1px; }
  .divider { width: 1px; height: 36px; background: #b65d20; margin: 7px 8px 0 9px; flex: none; }
</style>
